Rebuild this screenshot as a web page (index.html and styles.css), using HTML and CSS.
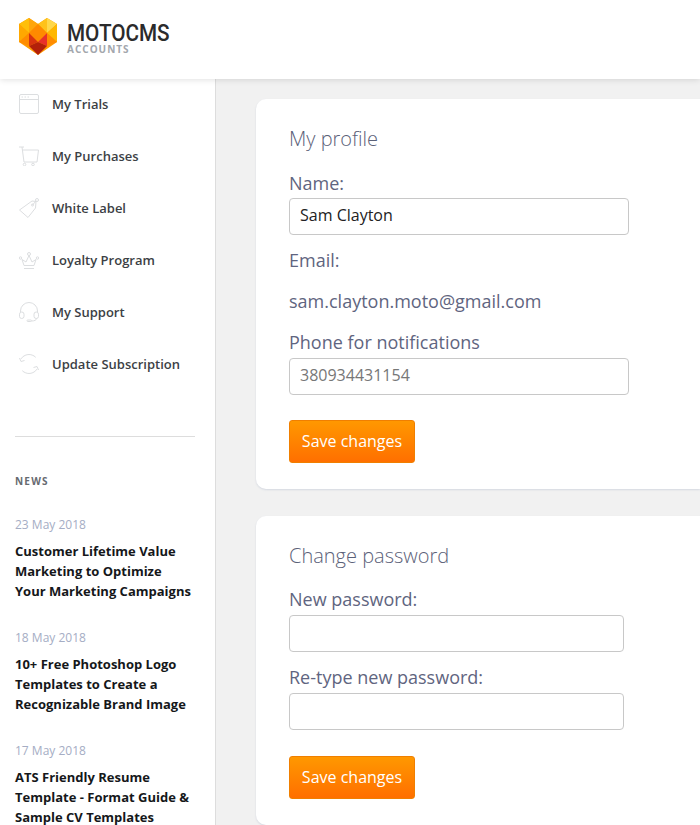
FILE: index.html
```html
<!DOCTYPE html>
<html lang="en">
<head>
    <meta charset="UTF-8">
    <meta name="viewport" content="width=device-width, initial-scale=1.0">
    <title>MotoCMS Accounts</title>
    <link rel="stylesheet" href="styles.css">
</head>
<body>
    <div class="header">
        <svg class="logo-mark" viewBox="0 0 38 37">
            <polygon points="0,6 10,0 19,6 19,37 0,24" fill="#ff9a00"/>
            <polygon points="38,6 28,0 19,6 19,37 38,24" fill="#ff9a00"/>
            <polygon points="0,6 10,0 10,15" fill="#ffbf0a"/>
            <polygon points="10,0 19,6 10,15" fill="#ffa50a"/>
            <polygon points="0,6 10,15 0,24" fill="#ffa800"/>
            <polygon points="0,24 10,15 10,28" fill="#ff8c00"/>
            <polygon points="19,6 28,0 28,15" fill="#ffc21a"/>
            <polygon points="28,0 38,6 28,15" fill="#ffd84a"/>
            <polygon points="38,6 38,24 28,15" fill="#ffb800"/>
            <polygon points="38,24 28,15 28,28" fill="#ff8c00"/>
            <polygon points="19,6 28,15 19,24 10,15" fill="#ff8a00"/>
            <polygon points="10,15 19,24 10,28" fill="#d8330f"/>
            <polygon points="28,15 19,24 28,28" fill="#e8302a"/>
            <polygon points="10,28 19,24 28,28 19,37" fill="#b3200a"/>
        </svg>
        <div class="logo-text">
            <div class="logo-name">MOTOCMS</div>
            <div class="logo-sub">ACCOUNTS</div>
        </div>
    </div>

    <div class="layout">
        <div class="sidebar">
            <ul class="menu">
                <li>
                    <svg class="menu-icon" viewBox="0 0 20 20"><rect x="0.500" y="0.500" width="19" height="19" rx="1.500"/><path d="M0.500 5.500h19M2.500 3h1.500M5.500 3h1.500M8.500 3h1.500"/></svg>
                    My Trials
                </li>
                <li>
                    <svg class="menu-icon" viewBox="0 0 20 20"><path d="M0 1h5M3 1l2 15h13M3.400 4h16.100l-1.500 12"/><circle cx="5.500" cy="18.500" r="1.300"/><circle cx="14" cy="18.500" r="1.300"/></svg>
                    My Purchases
                </li>
                <li>
                    <svg class="menu-icon" viewBox="0 0 20 20"><path d="M0.500 12L13 3l4 0.500-0.500 6.500-7.500 9.500z"/><circle cx="13.500" cy="7" r="1"/><path d="M13.500 7l3.500-4"/><circle cx="18" cy="2" r="1.500"/></svg>
                    White Label
                </li>
                <li>
                    <svg class="menu-icon" viewBox="0 0 20 20"><path d="M3 9.500l4 2.500 3-6.500 3 6.500 4-2.500-2 6H5zM5 18.500h10"/><circle cx="10" cy="4" r="1.500"/><circle cx="1.500" cy="8" r="1.200"/><circle cx="18.500" cy="8" r="1.200"/></svg>
                    Loyalty Program
                </li>
                <li>
                    <svg class="menu-icon" viewBox="0 0 20 20"><path d="M1.500 10V9a8.500 8.500 0 0 1 17 0v1"/><rect x="0.500" y="10" width="4.500" height="6.500" rx="2.200"/><rect x="15" y="10" width="4.500" height="6.500" rx="2.200"/><path d="M17.500 16.500c0 1.500-2 2.500-5 2.500"/><rect x="8" y="18" width="4.500" height="1.500" rx="0.700"/></svg>
                    My Support
                </li>
                <li>
                    <svg class="menu-icon" viewBox="0 0 20 20"><path d="M2 4.900A9.500 9.500 0 0 1 16.700 3.300M18 15.100A9.500 9.500 0 0 1 3.300 16.700M0.500 4l1.500 3.500 3.500-1M19.500 16l-1.500-3.500-3.500 1"/></svg>
                    Update Subscription
                </li>
            </ul>

            <div class="news">
                <h4>NEWS</h4>
                <div class="news-item">
                    <div class="news-date">23 May 2018</div>
                    <a class="news-title">Customer Lifetime Value Marketing to Optimize Your Marketing Campaigns</a>
                </div>
                <div class="news-item">
                    <div class="news-date">18 May 2018</div>
                    <a class="news-title">10+ Free Photoshop Logo Templates to Create a Recognizable Brand Image</a>
                </div>
                <div class="news-item">
                    <div class="news-date">17 May 2018</div>
                    <a class="news-title">ATS Friendly Resume Template - Format Guide &amp; Sample CV Templates</a>
                </div>
            </div>
        </div>

        <div class="content">
            <div class="card">
                <h2>My profile</h2>
                <label>Name:</label>
                <input class="field" type="text" value="Sam Clayton">
                <label class="label-gap">Email:</label>
                <div class="email">sam.clayton.moto@gmail.com</div>
                <label class="label-tight">Phone for notifications</label>
                <input class="field" type="text" placeholder="380934431154">
                <button class="save">Save changes</button>
            </div>
            <div class="card card-password">
                <h2>Change password</h2>
                <label class="label-tight">New password:</label>
                <input class="field short" type="password">
                <label class="label-tight label-retype">Re-type new password:</label>
                <input class="field short" type="password">
                <button class="save">Save changes</button>
            </div>
        </div>
    </div>
</body>
</html>
```

FILE: styles.css
```css
html, body {
    height: 825px;
    overflow: hidden;
}
body {
    margin: 0;
    font-family: "Open Sans", sans-serif;
    background-color: #f1f1f1;
}
.header {
    position: relative;
    z-index: 2;
    height: 79px;
    background-color: #fff;
    box-shadow: 0 1px 6px rgba(0,0,0,0.12);
    display: flex;
    align-items: flex-start;
    padding: 18px 0 0 19px;
    box-sizing: border-box;
}
.logo-mark {
    width: 38px;
    height: 37px;
}
.logo-text {
    margin-left: 10px;
}
.logo-name {
    font-family: Roboto, sans-serif;
    font-size: 23px;
    line-height: 20px;
    margin-top: 6px;
    font-weight: 500;
    color: #2b2b2b;
    transform: scaleX(0.9);
    transform-origin: left center;
}
.logo-sub {
    font-size: 10px;
    line-height: 12px;
    margin-top: -1px;
    font-weight: 700;
    color: #a3a7ad;
    letter-spacing: 1px;
}
.layout {
    display: flex;
}
.sidebar {
    flex: 0 0 216px;
    height: 746px;
    box-sizing: border-box;
    background-color: #fff;
    border-right: 1px solid #ddd;
    padding: 0 20px 0 15px;
    overflow: hidden;
}
.menu {
    list-style: none;
    margin: -1px 0 0;
    padding: 0 0 46px;
    border-bottom: 1px solid #ddd;
}
.menu li {
    height: 52px;
    display: flex;
    align-items: center;
    font-size: 13px;
    font-weight: 600;
    color: #3c3f45;
    padding-left: 4px;
}
.menu-icon {
    width: 20px;
    height: 20px;
    margin-right: 13px;
    fill: none;
    stroke: #dcdee0;
    stroke-width: 1;
}
.news h4 {
    margin: 37px 0 0;
    font-size: 10px;
    line-height: 14px;
    font-weight: 700;
    letter-spacing: 1.2px;
    color: #666a70;
}
.news-item {
    margin-top: 29px;
}
.news-date {
    font-size: 12px;
    line-height: 16px;
    color: #a5adc4;
    margin-bottom: 8px;
}
.news-title {
    display: block;
    font-size: 13px;
    line-height: 20px;
    font-weight: 700;
    color: #15171a;
}
.content {
    flex: 1;
    padding: 20px 0 0 40px;
    min-width: 0;
}
.card {
    background-color: #fff;
    border-radius: 10px 0 0 10px;
    box-shadow: 0 1px 2px rgba(100,120,160,0.2);
    padding: 25px 0 26px 33px;
    margin-bottom: 27px;
}
.card h2 {
    margin: 0 0 17px;
    font-size: 20px;
    line-height: 30px;
    font-weight: 300;
    color: #5b6178;
}
label {
    display: block;
    font-size: 18px;
    line-height: 24px;
    color: #5f6580;
    margin-bottom: 3px;
}
.label-gap {
    margin-top: 13px;
}
.label-tight {
    margin-top: -1px;
    margin-bottom: 4px;
}
.label-retype {
    margin-top: 13px;
}
.field {
    display: block;
    box-sizing: border-box;
    width: 340px;
    height: 37px;
    padding: 0 10px 4px;
    border: 1px solid #c8c8c8;
    border-radius: 4px;
    font-family: "Open Sans", sans-serif;
    font-size: 16px;
    color: #222;
    background-color: #fff;
}
.field.short {
    width: 335px;
}
.field::placeholder {
    color: #777;
}
.email {
    font-size: 18px;
    line-height: 24px;
    color: #5f6580;
    margin: 17px 0 18px;
}
.save {
    display: block;
    margin-top: 25px;
    width: 126px;
    height: 43px;
    border: 1px solid #f07f00;
    border-radius: 3px;
    background: linear-gradient(#ff9800, #ff6f00);
    color: #fff;
    font-family: "Open Sans", sans-serif;
    font-size: 16px;
    font-weight: 400;
    padding: 0 0 2px;
}
.card-password .save {
    margin-top: 26px;
}
```
